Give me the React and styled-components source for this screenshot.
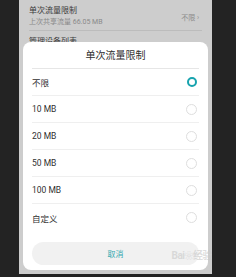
import React from 'react';
import styled, { createGlobalStyle } from 'styled-components';

const GlobalStyle = createGlobalStyle`
  html, body {
    margin: 0;
    padding: 0;
    background: #232323;
  }
  body {
    font-family: Roboto, "Noto Sans CJK SC", sans-serif;
  }
`;

const options = ['不限', '10 MB', '20 MB', '50 MB', '100 MB', '自定义'];

const App = () => {
  const selected = 0;

  return (
    <>
      <GlobalStyle />
      <Frame>
        <Screen>
          <SettingRow>
            <SettingText>
              <SettingTitle>单次流量限制</SettingTitle>
              <SettingSub>上次共享流量 66.05 MB</SettingSub>
            </SettingText>
            <SettingValue>不限 ›</SettingValue>
          </SettingRow>
          <SettingPeek>管理设备列表</SettingPeek>

          <Dialog>
            <DialogTitle>单次流量限制</DialogTitle>
            <OptionList>
              {options.map((label, i) => (
                <OptionRow key={label} last={i === options.length - 1}>
                  <OptionLabel>{label}</OptionLabel>
                  <Radio checked={i === selected} />
                </OptionRow>
              ))}
            </OptionList>
            <CancelButton>取消</CancelButton>
            <Watermark>Bai<Paw>❀</Paw>经验</Watermark>
          </Dialog>
        </Screen>
      </Frame>
    </>
  );
};

// Styled Components
const Frame = styled.div`
  width: 236px;
  height: 277px;
  padding-left: 19px;
  box-sizing: border-box;
  overflow: hidden;
`;

const Screen = styled.div`
  position: relative;
  width: 193px;
  height: 274px;
  background: #cdcdcd;
  padding: 0 4px;
  box-sizing: border-box;
  overflow: hidden;
`;

const SettingRow = styled.div`
  display: flex;
  align-items: center;
  justify-content: space-between;
  height: 31px;
  margin: 0 6px;
  border-bottom: 1px solid #bcbcbc;
  box-sizing: border-box;
  padding-top: 3px;
`;

const SettingText = styled.div`
  display: flex;
  flex-direction: column;
  gap: 2px;
`;

const SettingTitle = styled.div`
  font-size: 8px;
  line-height: 10px;
  color: #3a3a3a;
`;

const SettingSub = styled.div`
  font-size: 7px;
  line-height: 9px;
  color: #8a8a8a;
`;

const SettingValue = styled.div`
  font-size: 7px;
  color: #8c8c8c;
  padding-right: 3px;
`;

const SettingPeek = styled.div`
  font-size: 8px;
  line-height: 10px;
  color: #3a3a3a;
  margin: 6px 6px 0;
  height: 5px;
`;

const Dialog = styled.div`
  position: relative;
  width: 185px;
  height: 228px;
  background: #ffffff;
  border-radius: 8px;
  padding: 0 9px;
  box-sizing: border-box;
  display: flex;
  flex-direction: column;
`;

const DialogTitle = styled.div`
  height: 26px;
  line-height: 28px;
  text-align: center;
  font-size: 10px;
  color: #2e2e2e;
  border-bottom: 1px solid #e6e6e6;
`;

const OptionList = styled.div`
  display: flex;
  flex-direction: column;
`;

const OptionRow = styled.div`
  display: flex;
  align-items: center;
  justify-content: space-between;
  height: 27px;
  padding-right: 2px;
  border-bottom: ${p => (p.last ? 'none' : '1px solid #efefef')};
  box-sizing: border-box;
`;

const OptionLabel = styled.span`
  font-size: 8.5px;
  color: #2f2f2f;
`;

const Radio = styled.span`
  width: ${p => (p.checked ? '6px' : '9px')};
  height: ${p => (p.checked ? '6px' : '9px')};
  border-radius: 50%;
  border: ${p => (p.checked ? '2.5px solid #17a3ae' : '1px solid #dedede')};
`;

const CancelButton = styled.div`
  margin-top: 11px;
  height: 23px;
  border-radius: 12px;
  background: #f1f1f1;
  display: flex;
  align-items: center;
  justify-content: center;
  font-size: 8px;
  color: #31a8b0;
`;

const Watermark = styled.div`
  position: absolute;
  right: -4px;
  bottom: 8px;
  font-size: 10px;
  font-weight: bold;
  color: rgba(200, 200, 200, 0.6);
  letter-spacing: -0.5px;
`;

const Paw = styled.span`
  font-size: 9px;
`;

export default App;
